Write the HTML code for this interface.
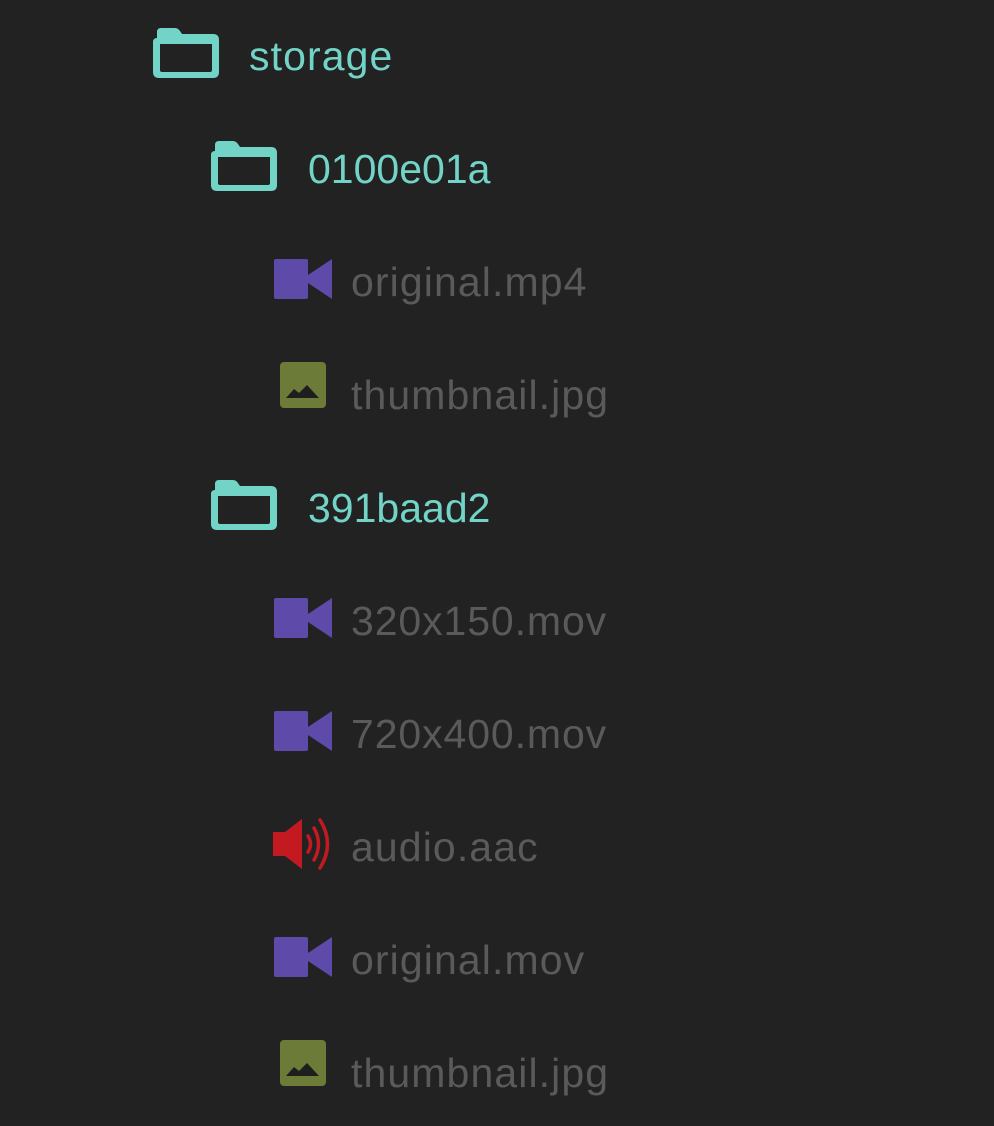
<!DOCTYPE html>
<html><head><meta charset="utf-8"><style>
html,body{margin:0;padding:0;background:#222222;width:994px;height:1126px;overflow:hidden}
.r{position:absolute;font-family:"Liberation Sans",sans-serif;font-size:41px;letter-spacing:1.1px;line-height:1}
.t{color:#72d3c7}.g{color:#5a5a5a}
svg{position:absolute}
</style></head><body>
<svg width="994" height="1126">
<defs>
<g id="fold"><path d="M4 10 V4 Q4 0 8 0 H22 Q25 0 27 3 L29 6 H60 Q66 6 66 12 V44 Q66 50 60 50 H6 Q0 50 0 44 V14 Q0 10 4 10Z M7 16 V42 Q7 44 9 44 H57 Q59 44 59 42 V16Z" fill="#72d3c7" fill-rule="evenodd"/></g>
<g id="vid"><rect x="0" y="0" width="34" height="40" rx="2" fill="#5e4aa9"/><path d="M28 20 L58 0 V40 Z" fill="#5e4aa9"/></g>
<g id="img"><rect x="0" y="0" width="46" height="46" rx="4" fill="#6c7c38"/><path d="M6 36 L14 27 L19 31 L27 23 L39 36 Z" fill="#1e1e1e"/></g>
</defs>
<use href="#fold" x="153" y="28"/>
<use href="#fold" x="211" y="141"/>
<use href="#fold" x="211" y="480"/>
<use href="#vid" x="274" y="259"/>
<use href="#img" x="280" y="362"/>
<use href="#vid" x="274" y="598"/>
<use href="#vid" x="274" y="711"/>
<use href="#vid" x="274" y="937"/>
<use href="#img" x="280" y="1040"/>
<path d="M273 832 H285 L302 819 V869 L285 856 H273Z" fill="#c21a20"/>
<g fill="none" stroke="#c21a20" stroke-width="3.5" stroke-linecap="round">
<path d="M308 836 Q313 844 308 852"/>
<path d="M314 828 Q323 844 314 860"/>
<path d="M320 820 Q335 844 320 868"/>
</g>
</svg>
<div class="r t" style="left:249px;top:36px">storage</div>
<div class="r t" style="left:308px;top:149px;letter-spacing:0">0100e01a</div>
<div class="r g" style="left:351px;top:262px">original.mp4</div>
<div class="r g" style="left:351px;top:375px">thumbnail.jpg</div>
<div class="r t" style="left:308px;top:488px;letter-spacing:0">391baad2</div>
<div class="r g" style="left:351px;top:601px;letter-spacing:0.9px">320x150.mov</div>
<div class="r g" style="left:351px;top:714px;letter-spacing:0.9px">720x400.mov</div>
<div class="r g" style="left:351px;top:827px">audio.aac</div>
<div class="r g" style="left:351px;top:940px">original.mov</div>
<div class="r g" style="left:351px;top:1053px">thumbnail.jpg</div>
</body></html>
